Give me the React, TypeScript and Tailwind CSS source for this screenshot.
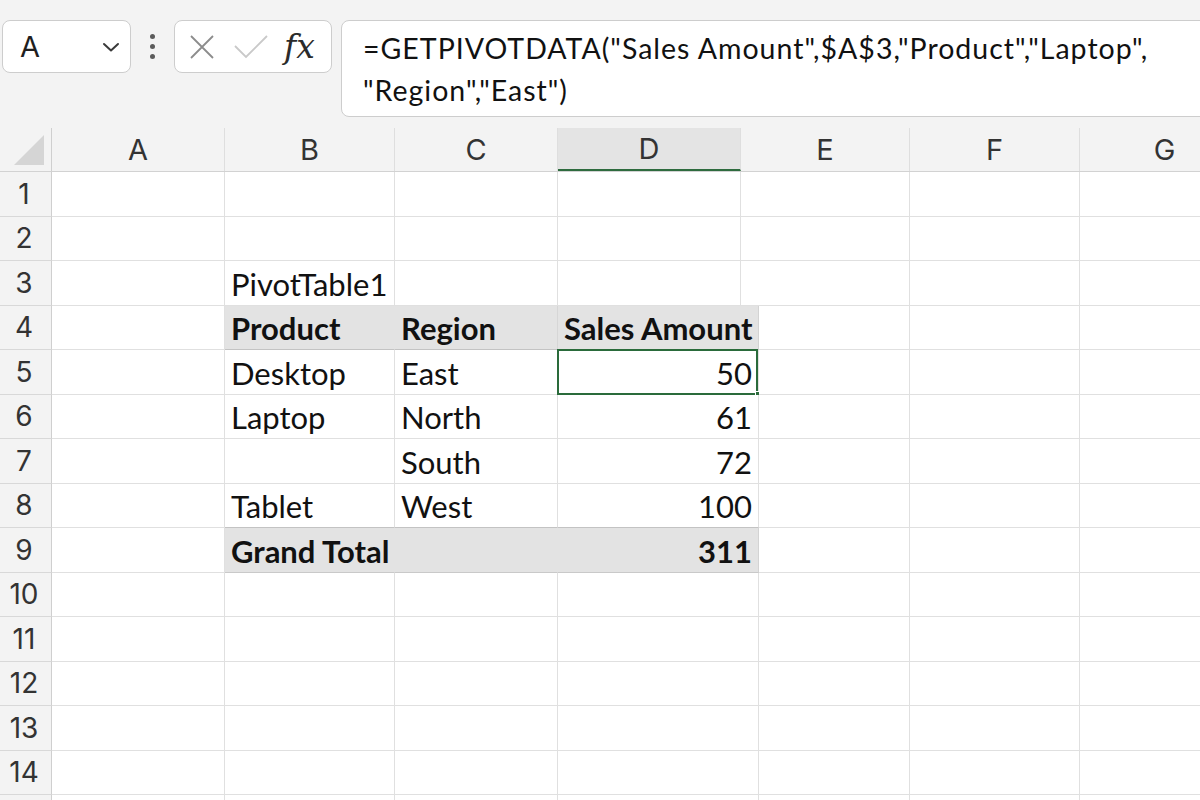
import React from "react";

type Cell = { t?: string; b?: boolean; r?: boolean };

const letters = ["A", "B", "C", "D", "E", "F", "G"];

// rows 1-3 follow the header widths, the pivot rows have a wider D column
const colsTop = ["w-[173px]", "w-[170px]", "w-[163px]", "w-[183px]", "w-[169px]", "w-[170px]", "w-[170px]"];
const colsPivot = ["w-[173px]", "w-[170px]", "w-[163px]", "w-[201px]", "w-[151px]", "w-[170px]", "w-[170px]"];

const data: Record<number, Cell[]> = {
  3: [{}, { t: "PivotTable1" }],
  4: [{}, { t: "Product", b: true }, { t: "Region", b: true }, { t: "Sales Amount", b: true }],
  5: [{}, { t: "Desktop" }, { t: "East" }, { t: "50", r: true }],
  6: [{}, { t: "Laptop" }, { t: "North" }, { t: "61", r: true }],
  7: [{}, {}, { t: "South" }, { t: "72", r: true }],
  8: [{}, { t: "Tablet" }, { t: "West" }, { t: "100", r: true }],
  9: [{}, { t: "Grand Total", b: true }, {}, { t: "311", b: true, r: true }],
};

function cellClass(row: number, col: number) {
  const inPivot = col >= 1 && col <= 3;
  if (row === 4 && inPivot) {
    const right = col === 1 ? "border-r-[#e3e3e3]" : col === 2 ? "border-r-[#d6d6d6]" : "border-r-[#d3d3d3]";
    return `bg-[#e3e3e3] border-b-[#c3c3c3] ${right}`;
  }
  if (row === 9 && inPivot) {
    const right = col === 3 ? "border-r-[#d3d3d3]" : "border-r-[#e3e3e3]";
    return `bg-[#e3e3e3] border-b-[#c9c9c9] ${right}`;
  }
  if (row === 8 && inPivot) return "bg-white border-b-[#c3c3c3] border-r-[#e0e0e0]";
  return "bg-white border-b-[#e0e0e0] border-r-[#e0e0e0]";
}

function Toolbar() {
  return (
    <div className="flex h-[128px] items-start bg-[#f3f3f3] pl-[2px] pt-[20px]">
      {/* name box */}
      <div className="flex h-[53px] w-[129px] shrink-0 items-center justify-between rounded-[8px] border border-[#cdcdcd] bg-white pl-[17px] pr-[10px]">
        <span className="font-[Inter,sans-serif] text-[29px] leading-none text-[#1f1f1f]">A</span>
        <svg width="18" height="12" viewBox="0 0 18 12" fill="none">
          <path d="M2 3l7 6.5L16 3" stroke="#3a3a3a" strokeWidth="2" strokeLinecap="round" strokeLinejoin="round" />
        </svg>
      </div>

      <div className="flex h-[53px] w-[43px] shrink-0 flex-col items-center justify-center gap-[5px]">
        <span className="h-[5px] w-[5px] rounded-full bg-[#5b5b5b]" />
        <span className="h-[5px] w-[5px] rounded-full bg-[#5b5b5b]" />
        <span className="h-[5px] w-[5px] rounded-full bg-[#5b5b5b]" />
      </div>

      {/* cancel / enter / fx */}
      <div className="flex h-[53px] w-[158px] shrink-0 items-center rounded-[8px] border border-[#cdcdcd] bg-white pl-[14px]">
        <svg width="26" height="26" viewBox="0 0 26 26" fill="none">
          <path d="M2 2l22 22M24 2L2 24" stroke="#8c8c8c" strokeWidth="1.8" />
        </svg>
        <svg className="ml-[18px]" width="36" height="26" viewBox="0 0 36 26" fill="none">
          <path d="M2 12l11 11L34 2" stroke="#c9c9c9" strokeWidth="1.8" />
        </svg>
        <span className="ml-[15px] font-['DejaVu_Serif',serif] text-[33px] italic leading-none text-[#2b2b2b]">fx</span>
      </div>

      {/* formula */}
      <div className="ml-[9px] h-[97px] w-[880px] shrink-0 rounded-[8px] border border-[#cdcdcd] bg-white pl-[21px] pt-[6px] font-[Lato,sans-serif] text-[28.5px] leading-[42px] tracking-[1px] text-[#111]">
        <div>=GETPIVOTDATA("Sales Amount",$A$3,"Product","Laptop",</div>
        <div>"Region","East")</div>
      </div>
    </div>
  );
}

function ColumnHeader() {
  return (
    <div className="flex h-[44px] border-b border-[#d2d2d2] bg-[#f3f3f3]">
      <div className="relative w-[52px] shrink-0 border-r border-[#cfcfcf]">
        <svg className="absolute left-[14px] top-[7px]" width="31" height="31" viewBox="0 0 31 31">
          <path d="M0 30L30 0V30Z" fill="#d5d5d5" />
        </svg>
      </div>
      {letters.map((l, i) => (
        <div
          key={l}
          className={`${colsTop[i]} flex shrink-0 items-center justify-center border-r border-[#dedede] font-[Inter,sans-serif] text-[29px] text-[#333] ${
            l === "D" ? "border-b-2 border-b-[#2e6b3e] bg-[#e4e4e4]" : ""
          }`}
        >
          {l}
        </div>
      ))}
    </div>
  );
}

function Row({ n }: { n: number }) {
  const cols = n <= 3 ? colsTop : colsPivot;
  const cells = data[n] ?? [];
  return (
    <div className="flex h-[44.5px]">
      <div className="flex w-[52px] shrink-0 items-center justify-center border-b border-r border-b-[#d8d8d8] border-r-[#cfcfcf] bg-[#f3f3f3] pr-[3px] font-[Inter,sans-serif] text-[28px] text-[#333]">
        {n <= 14 ? n : ""}
      </div>
      {cols.map((w, i) => {
        const c = cells[i] ?? {};
        const selected = n === 5 && i === 3;
        return (
          <div
            key={i}
            className={`${w} relative flex shrink-0 items-center overflow-visible whitespace-nowrap border-b border-r px-[6px] pt-[2px] font-[Lato,sans-serif] text-[31px] text-[#111] ${
              c.r ? "justify-end" : "justify-start"
            } ${c.b ? "font-bold text-[30.5px]" : ""} ${cellClass(n, i)}`}
          >
            {c.t}
            {selected && (
              <>
                <span className="absolute -left-[1px] -top-[1px] h-[calc(100%+2px)] w-[calc(100%+1px)] border-2 border-[#2a6b3b]" />
                <span className="absolute -bottom-[4px] -right-[4px] h-[7px] w-[7px] border border-white bg-[#2a6b3b]" />
              </>
            )}
          </div>
        );
      })}
    </div>
  );
}

export default function App() {
  return (
    <div className="h-[800px] w-[1200px] overflow-hidden bg-white">
      <Toolbar />
      <ColumnHeader />
      {Array.from({ length: 15 }, (_, i) => (
        <Row key={i} n={i + 1} />
      ))}
    </div>
  );
}
